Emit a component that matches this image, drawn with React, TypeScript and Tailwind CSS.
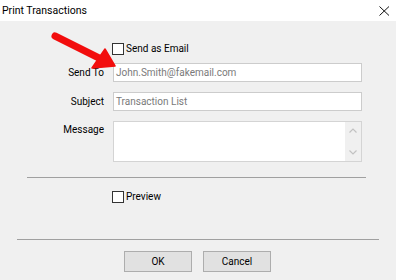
import React from 'react'

function CheckRow({ label }: { label: string }) {
  return (
    <div className="flex items-center pl-[112px] h-[13px]">
      <div className="w-[12px] h-[12px] border border-[#333333] bg-white" />
      <span className="ml-[2px] text-black leading-none">{label}</span>
    </div>
  )
}

function Field({ label, value }: { label: string; value: string }) {
  return (
    <div className="flex items-center">
      <div className="w-[104px] text-right text-black">{label}</div>
      <div className="ml-[9px] w-[249px] h-[19px] bg-white border border-[#cccccc] flex items-center px-[2px] text-[#7a7a7a]">
        {value}
      </div>
    </div>
  )
}

function Arrow() {
  return (
    <svg className="absolute left-0 top-0 pointer-events-none" width="130" height="80" viewBox="0 0 130 80">
      <g fill="#f20d0d" stroke="#f20d0d">
        <line x1="55" y1="36" x2="99" y2="58" strokeWidth="7" strokeLinecap="round" />
        <polygon points="105,49 115,66 92,68" strokeWidth="1.5" strokeLinejoin="round" />
      </g>
    </svg>
  )
}

export default function App() {
  return (
    <div className="relative w-[396px] h-[280px] flex flex-col bg-[#f0f0f0] text-[10px] overflow-hidden" style={{ fontFamily: 'Roboto, "Liberation Sans", sans-serif' }}>
      <div className="h-[21px] bg-white flex items-center justify-between pl-[2px] pr-[6px]">
        <span className="text-[10.5px] text-black">Print Transactions</span>
        <svg width="11" height="10" viewBox="0 0 11 10">
          <path d="M0.5 0.5 L10 9.5 M10 0.5 L0.5 9.5" stroke="#111" strokeWidth="1" fill="none" />
        </svg>
      </div>

      <div className="flex-1 flex flex-col">
        <div className="mt-[21px]">
          <CheckRow label="Send as Email" />
        </div>

        <div className="mt-[8px]">
          <Field label="Send To" value="John.Smith@fakemail.com" />
        </div>
        <div className="mt-[10px]">
          <Field label="Subject" value="Transaction List" />
        </div>

        <div className="mt-[10px] flex items-start">
          <div className="w-[104px] text-right text-black pt-[1px]">Message</div>
          <div className="ml-[9px] w-[249px] h-[41px] bg-white border border-[#d4d4d4] flex justify-end">
            <div className="w-[16px] h-full bg-[#f0f0f0] flex flex-col items-center justify-between py-[6px]">
              <svg width="8" height="5" viewBox="0 0 8 5">
                <path d="M0.5 4.5 L4 1 L7.5 4.5" stroke="#c2c2c2" strokeWidth="1.2" fill="none" />
              </svg>
              <svg width="8" height="5" viewBox="0 0 8 5">
                <path d="M0.5 0.5 L4 4 L7.5 0.5" stroke="#c2c2c2" strokeWidth="1.2" fill="none" />
              </svg>
            </div>
          </div>
        </div>

        <div className="mt-[15px] ml-[27px] w-[339px] h-px bg-[#a0a0a0]" />

        <div className="mt-[12px]">
          <CheckRow label="Preview" />
        </div>

        <div className="mt-[36px] ml-[17px] w-[362px] h-px bg-[#a0a0a0]" />

        <div className="mt-[11px] flex pl-[124px] gap-[11px]">
          <button className="w-[68px] h-[21px] bg-[#e1e1e1] border border-[#adadad] text-black">OK</button>
          <button className="w-[68px] h-[21px] bg-[#e1e1e1] border border-[#adadad] text-black">Cancel</button>
        </div>
      </div>

      <Arrow />
    </div>
  )
}
